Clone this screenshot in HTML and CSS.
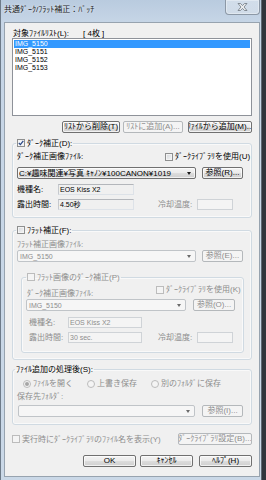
FILE: index.html
```html
<!DOCTYPE html>
<html lang="ja">
<head>
<meta charset="utf-8">
<title>共通ﾀﾞｰｸ/ﾌﾗｯﾄ補正：ﾊﾞｯﾁ</title>
<link rel="stylesheet" href="styles.css">
</head>
<body>
<div class="win">
  <div class="titlebar">
    <span class="title">共通ﾀﾞｰｸ/ﾌﾗｯﾄ補正：ﾊﾞｯﾁ</span>
    <div class="close">
      <svg width="11" height="8" viewBox="0 0 11 8"><path d="M1 0.5 L3.5 0.5 L5.5 2.6 L7.5 0.5 L10 0.5 L7 4 L10 7.5 L7.5 7.5 L5.5 5.4 L3.5 7.5 L1 7.5 L4 4 Z" fill="#eef0f2" stroke="#6f7780" stroke-width="0.8" stroke-linejoin="round"/></svg>
    </div>
  </div>
  <div class="client">
    <div class="toplbl"><span class="tl-a">対象ﾌｧｲﾙﾘｽﾄ(L):</span><span>[ 4枚 ]</span></div>
    <div class="listbox">
      <div class="item sel">IMG_5150</div>
      <div class="item">IMG_5151</div>
      <div class="item">IMG_5152</div>
      <div class="item">IMG_5153</div>
    </div>
    <div class="btnrow">
      <div class="btn w58">ﾘｽﾄから削除(T)</div>
      <div class="btn dis w60 ml3">ﾘｽﾄに追加(A)...</div>
      <div class="btn w64 ml5">ﾌｧｲﾙから追加(M)...</div>
    </div>

    <fieldset class="grp g-dark">
      <legend class="lg"><span class="cb on"><svg width="6" height="6" viewBox="0 0 6 6"><path d="M0.8 3 L2.4 4.6 L5.3 0.9" stroke="#2c4a86" stroke-width="1.3" fill="none"/></svg></span><span>ﾀﾞｰｸ補正(D):</span></legend>
      <div class="row r9">
        <span class="lw148">ﾀﾞｰｸ補正画像ﾌｧｲﾙ:</span>
        <span class="chk"><span class="cb"></span><span>ﾀﾞｰｸﾗｲﾌﾞﾗﾘを使用(U)</span></span>
      </div>
      <div class="row r12 mt6">
        <div class="combo w179"><span class="ct">C:¥趣味関連¥写真 ｷｬﾉﾝ¥100CANON¥1019</span><span class="arr"></span></div>
        <div class="btn w41 ml6">参照(R)...</div>
      </div>
      <div class="row r11 mt5">
        <span class="lab41">機種名:</span>
        <div class="edit w76">EOS Kiss X2</div>
      </div>
      <div class="row r11 mt4">
        <span class="lab41">露出時間:</span>
        <div class="edit w76">4.50秒</div>
        <span class="cool m24 dis">冷却温度:</span>
        <div class="edit w36 edis"></div>
      </div>
    </fieldset>

    <fieldset class="grp g-flat">
      <legend class="lg"><span class="cb"></span><span>ﾌﾗｯﾄ補正(F):</span></legend>
      <div class="row r9 dis">ﾌﾗｯﾄ補正画像ﾌｧｲﾙ:</div>
      <div class="row r12 mt1">
        <div class="combo cdis w179"><span class="ct sm">IMG_5150</span><span class="arr"></span></div>
        <div class="btn dis w41 ml6">参照(E)...</div>
      </div>

      <fieldset class="grp g-inner">
        <legend class="lg lg-in"><span class="cb cbdis"></span><span class="dis">ﾌﾗｯﾄ画像のﾀﾞｰｸ補正(P)</span></legend>
        <div class="row r13 top">
          <span class="lw130 dis dn">ﾀﾞｰｸ補正画像ﾌｧｲﾙ:</span>
          <span class="chk dis"><span class="cb cbdis"></span><span>ﾀﾞｰｸﾗｲﾌﾞﾗﾘを使用(K)</span></span>
        </div>
        <div class="row r12 mt1">
          <div class="combo cdis w160"><span class="ct sm">IMG_5150</span><span class="arr"></span></div>
          <div class="btn dis w42 ml7">参照(O)...</div>
        </div>
        <div class="row r11 mt6">
          <span class="lab39 dis">機種名:</span>
          <div class="edit w74 edis">EOS Kiss X2</div>
        </div>
        <div class="row r11 mt4">
          <span class="lab39 dis">露出時間:</span>
          <div class="edit w74 edis">30 sec.</div>
          <span class="cool m16 dis">冷却温度:</span>
          <div class="edit w36 edis"></div>
        </div>
      </fieldset>
    </fieldset>

    <fieldset class="grp g-file">
      <legend class="lg lg-txt"><span>ﾌｧｲﾙ追加の処理後(S):</span></legend>
      <div class="row r9 radios dis">
        <span class="rad"><span class="rb on"></span><span>ﾌｧｲﾙを開く</span></span>
        <span class="rad"><span class="rb"></span><span>上書き保存</span></span>
        <span class="rad"><span class="rb"></span><span>別のﾌｫﾙﾀﾞに保存</span></span>
      </div>
      <div class="row r9 mt4 dis">保存先ﾌｫﾙﾀﾞ:</div>
      <div class="row r12 mt4">
        <div class="combo cdis w177 ml1"><span class="ct"></span><span class="arr"></span></div>
        <div class="btn dis w41 ml7">参照(I)...</div>
      </div>
    </fieldset>

    <div class="row r12 optrow">
      <span class="chk dis"><span class="cb cbdis"></span><span>実行時にﾀﾞｰｸﾗｲﾌﾞﾗﾘのﾌｧｲﾙ名を表示(Y)</span></span>
      <div class="btn dis w74 push">ﾀﾞｰｸﾗｲﾌﾞﾗﾘ設定(B)...</div>
    </div>

    <div class="row r12 endrow">
      <div class="btn w53">OK</div>
      <div class="btn w53 ml4">ｷｬﾝｾﾙ</div>
      <div class="btn w53 ml6">ﾍﾙﾌﾟ(H)</div>
    </div>
  </div>
</div>
</body>
</html>
```

FILE: styles.css
```css
* { box-sizing: border-box; }
html, body { margin: 0; padding: 0; }
body {
  width: 266px;
  height: 480px;
  overflow: hidden;
  background: #30353c;
  font-family: "Liberation Sans", "Noto Sans CJK JP", sans-serif;
  font-size: 8px;
  line-height: 9px;
  color: #000;
}
.win {
  width: 262px;
  height: 480px;
  background: linear-gradient(180deg, #b9cbdf 0px, #c6d5e6 22px, #cad8e7 100%);
  border-left: 1px solid #6e7b89;
  border-right: 1px solid #5d6772;
  display: flex;
  flex-direction: column;
}
.titlebar {
  height: 22px;
  display: flex;
  align-items: flex-start;
  flex: none;
}
.title {
  margin: 5px 0 0 3px;
  white-space: nowrap;
  color: #1b1b1b;
  text-shadow: 0 0 3px rgba(255,255,255,0.8);
}
.close {
  margin-left: auto;
  margin-right: 1px;
  width: 35px;
  height: 15px;
  border: 1px solid #8c98a6;
  border-top: none;
  border-radius: 0 0 4px 4px;
  background: linear-gradient(180deg, rgba(255,255,255,0.35), rgba(220,228,236,0.55));
  box-shadow: inset 0 0 0 1px rgba(255,255,255,0.35);
  display: flex;
  align-items: center;
  justify-content: center;
}
.close svg { display: block; }

.client {
  margin-left: 3px;
  width: 256px;
  height: 455px;
  flex: none;
  background: #f0f0f0;
  border: 1px solid #97a3af;
}

.toplbl {
  margin-top: 6px;
  padding-left: 8px;
  height: 9px;
  display: flex;
  white-space: nowrap;
}
.tl-a { width: 70px; }

.listbox {
  margin-left: 7px;
  width: 240px;
  height: 78px;
  border: 1px solid #8e9299;
  background: #fff;
  padding: 1px 0;
}
.item {
  margin: 0 1px;
  height: 8px;
  line-height: 8px;
  font-size: 7px;
  padding-left: 1px;
  white-space: nowrap;
}
.item.sel { background: #3399ff; color: #fff; }

.btnrow {
  margin-top: 5px;
  margin-right: 7px;
  height: 12px;
  display: flex;
  justify-content: flex-end;
}

.btn {
  height: 12px;
  flex: none;
  border: 1px solid #707070;
  border-radius: 2px;
  background: linear-gradient(180deg, #f3f3f3 0%, #ebebeb 50%, #dddddd 50%, #cfcfcf 100%);
  box-shadow: inset 0 0 0 1px rgba(255,255,255,0.7);
  display: flex;
  align-items: center;
  justify-content: center;
  white-space: nowrap;
  overflow: hidden;
  line-height: 10px;
  color: #000;
}
.btn.dis {
  border-color: #b4b8bb;
  background: #f4f4f4;
  box-shadow: none;
  color: #8d8d8d;
}

.w36 { width: 36px; }
.w41 { width: 41px; }
.w42 { width: 42px; }
.w53 { width: 53px; }
.w58 { width: 58px; }
.w60 { width: 60px; }
.w64 { width: 64px; }
.w74 { width: 74px; }
.w76 { width: 76px; }
.w160 { width: 160px; }
.w177 { width: 177px; }
.w179 { width: 179px; }
.ml1 { margin-left: 1px; }
.ml3 { margin-left: 3px; }
.ml4 { margin-left: 4px; }
.ml5 { margin-left: 5px; }
.ml6 { margin-left: 6px; }
.ml7 { margin-left: 7px; }
.mt1 { margin-top: 1px; }
.mt4 { margin-top: 4px; }
.mt5 { margin-top: 5px; }
.mt6 { margin-top: 6px; }

.dis { color: #8d8d8d; }

/* group boxes */
.grp {
  margin: 0;
  min-width: 0;
  border: 1px solid #d0dae2;
  border-radius: 3px;
  box-shadow: inset 0 0 0 1px rgba(255,255,255,0.6);
  padding: 0 0 0 4px;
}
.g-dark {
  margin: 5px 0 0 7px;
  width: 240px;
  padding-top: 4px;
  padding-bottom: 7px;
}
.g-flat {
  margin: 7px 0 0 7px;
  width: 240px;
  padding-top: 5px;
  padding-bottom: 6px;
}
.g-inner {
  margin: 10px 0 0 4px;
  width: 223px;
  padding-top: 3px;
  padding-bottom: 9px;
}
.g-file {
  margin: 4px 0 0 7px;
  width: 240px;
  padding-top: 5px;
  padding-bottom: 7px;
}
.lg {
  display: flex;
  align-items: center;
  height: 10px;
  padding: 0 1px;
  margin-left: -1px;
  white-space: nowrap;
  gap: 2px;
}
.lg-in { margin-left: 0; }
.lg-txt { margin-left: -2px; }

.row {
  display: flex;
  align-items: center;
  white-space: nowrap;
}
.row.top { align-items: flex-start; }
.r9 { height: 9px; }
.r11 { height: 11px; }
.r12 { height: 12px; }
.r13 { height: 13px; }

.lw148 { width: 148px; flex: none; }
.lw130 { width: 130px; flex: none; padding-left: 1px; }
.dn { margin-top: 4px; }
.lab41 { width: 41px; flex: none; }
.lab39 { width: 39px; margin-left: 3px; flex: none; }
.cool { width: 39px; flex: none; }
.m24 { margin-left: 24px; }
.m16 { margin-left: 16px; }

.chk {
  display: flex;
  align-items: center;
  gap: 2px;
  white-space: nowrap;
  height: 9px;
}

/* checkbox */
.cb {
  width: 8px;
  height: 8px;
  flex: none;
  border: 1px solid #8e8f8f;
  background: linear-gradient(135deg, #d4d7db 0%, #f6f6f6 100%);
  box-shadow: inset 0 0 0 1px #f3f3f3;
  display: flex;
  align-items: center;
  justify-content: center;
}
.cb svg { display: block; }
.cb.on { background: #f4f6f9; }
.cb.cbdis {
  border-color: #bcbcbc;
  background: #f4f4f4;
  box-shadow: none;
}

/* radio */
.radios { padding-left: 6px; }
.rad {
  width: 64px;
  flex: none;
  display: flex;
  align-items: center;
  gap: 2px;
}
.rb {
  width: 8px;
  height: 8px;
  flex: none;
  border: 1px solid #bcbcbc;
  border-radius: 50%;
  background: #f4f4f4;
  display: flex;
  align-items: center;
  justify-content: center;
}
.rb.on::after {
  content: "";
  width: 4px;
  height: 4px;
  border-radius: 50%;
  background: #a6a6a6;
}

/* combo */
.combo {
  height: 12px;
  flex: none;
  border: 1px solid #707070;
  border-radius: 2px;
  background: linear-gradient(180deg, #f3f3f3 0%, #ebebeb 50%, #dddddd 50%, #cfcfcf 100%);
  box-shadow: inset 0 0 0 1px rgba(255,255,255,0.7);
  display: flex;
  align-items: center;
  padding-left: 1px;
}
.combo.cdis {
  border-color: #c0c4c8;
  background: #f6f6f6;
  box-shadow: none;
  color: #8d8d8d;
}
.ct {
  flex: 1;
  overflow: hidden;
  white-space: nowrap;
}
.ct.sm { font-size: 7px; padding-left: 1px; }
.arr {
  flex: none;
  width: 0;
  height: 0;
  border-left: 2.5px solid transparent;
  border-right: 2.5px solid transparent;
  border-top: 3px solid #1a1a1a;
  margin: 0 4px 0 2px;
}
.cdis .arr { border-top-color: #6a6a6a; }

/* edits */
.edit {
  height: 11px;
  flex: none;
  border: 1px solid #dde2e8;
  border-top-color: #b3b6bb;
  border-left-color: #c6c9ce;
  background: #f0f0f0;
  font-size: 7px;
  padding-left: 1px;
  display: flex;
  align-items: center;
  white-space: nowrap;
  overflow: hidden;
}
.edit.edis {
  border-color: #cfd3d7;
  background: #f4f4f4;
  color: #8d8d8d;
}

.optrow {
  margin-top: 8px;
  padding-left: 7px;
  padding-right: 7px;
}
.push { margin-left: auto; }

.endrow {
  margin-top: 10px;
  padding-right: 7px;
  justify-content: flex-end;
}
```
